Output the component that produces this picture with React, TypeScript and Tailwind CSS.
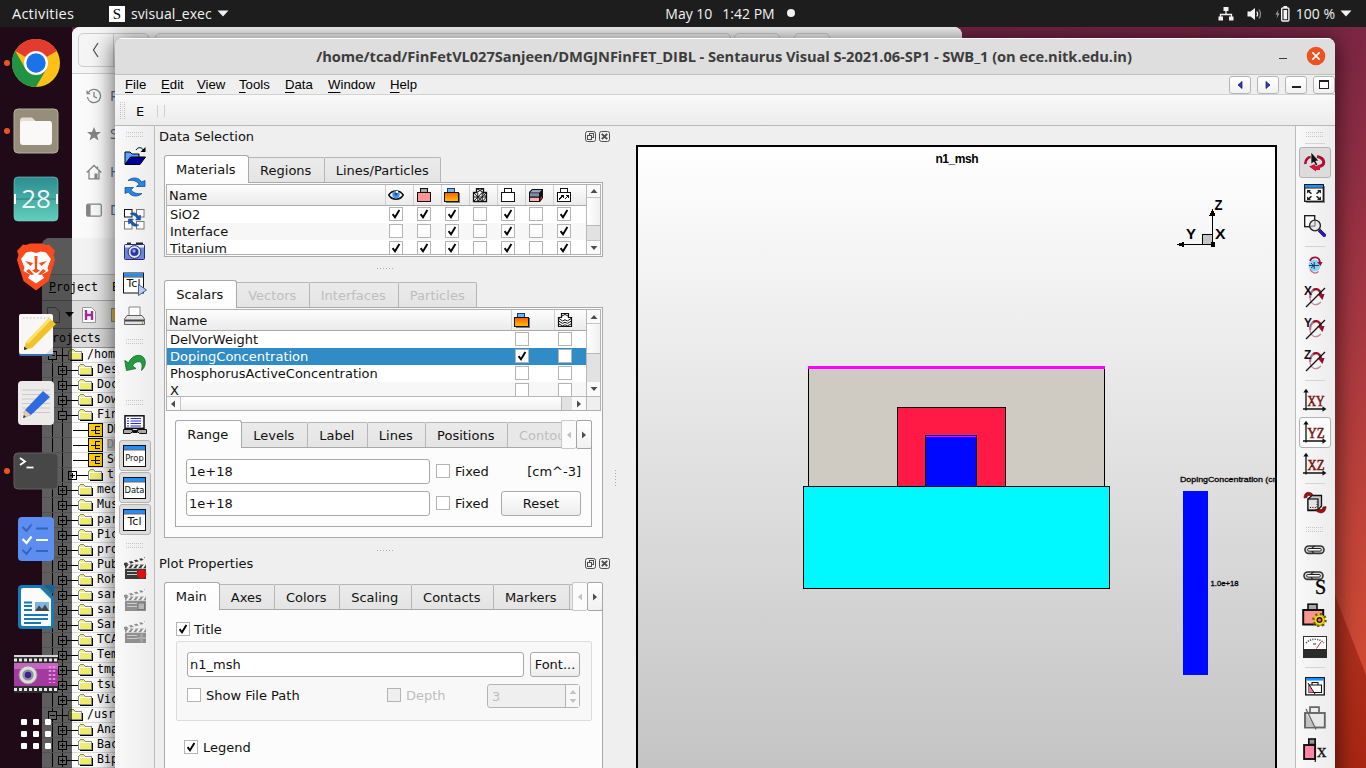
import React from "react";

type Kids = { children?: React.ReactNode };

const Svg = ({ w, h, children, vb, crisp }: Kids & { w: number; h: number; vb?: string; crisp?: boolean }) => (
  <svg width={w} height={h} viewBox={vb ?? `0 0 ${w} ${h}`} className="block shrink-0" shapeRendering={crisp ? "crispEdges" : undefined}>
    {children}
  </svg>
);

/* ---------- small widgets ---------- */

const Check = ({ on, off }: { on?: boolean; off?: boolean }) => (
  <span className={`block h-[14px] w-[14px] shrink-0 border border-[#b4b4b4] ${off ? "bg-[#efefef]" : "bg-white"}`}>
    {on && (
      <Svg w={12} h={12}>
        <path d="M2.6 6.2 L5 9.3 L9.4 2" fill="none" stroke="#000" strokeWidth="1.9" />
      </Svg>
    )}
  </span>
);

const Grip = () => (
  <Svg w={17} h={5} crisp>
    {[0, 2, 4].map((y) => Array.from({ length: 9 }, (_, i) => <rect key={`${y}-${i}`} x={i * 2} y={y} width="1" height="1" fill={y === 2 ? "#e2e2e2" : "#c4c4c4"} />))}
  </Svg>
);

const HDots = () => (
  <Svg w={17} h={1} crisp>
    {Array.from({ length: 6 }, (_, i) => <rect key={i} x={i * 3} y="0" width="1" height="1" fill="#a8a8a8" />)}
  </Svg>
);

const Arrow = ({ dir, dim, blue }: { dir: "u" | "d" | "l" | "r"; dim?: boolean; blue?: boolean }) => {
  const p = { u: "M0.5 6 L4 2 L7.5 6Z", d: "M0.5 2 L4 6 L7.5 2Z", l: "M6 0.5 L2 4 L6 7.5Z", r: "M2 0.5 L6 4 L2 7.5Z" }[dir];
  return (
    <Svg w={8} h={8}>
      <path d={p} fill={blue ? "#2b3bdc" : dim ? "#c2c2c2" : "#4d4d4d"} stroke={blue ? "#101040" : "none"} strokeWidth="0.7" />
    </Svg>
  );
};

const Tab = ({ w, on, dim, children }: Kids & { w: string; on?: boolean; dim?: boolean }) => (
  <div
    className={`${w} ${
      on
        ? "relative z-10 -mb-px h-[28px] rounded-t-[3px] border border-b-0 border-[#a9a9a9] bg-linear-to-b from-white to-[#fcfcfc]"
        : "h-[25px] rounded-tr-[2px] border-t border-r border-[#b6b6b6] bg-linear-to-b from-[#ebebeb] to-[#e4e4e4]"
    } ${dim ? "text-[#bebebe]" : "text-[#111]"} flex shrink-0 items-center justify-center overflow-hidden pr-[1.5px] whitespace-nowrap`}
  >
    {children}
  </div>
);

const TabArrows = () => (
  <div className="relative z-20 -mb-[2px] flex h-[29px] shrink-0">
    <div className="flex w-[15px] items-center justify-center rounded-[2px] border border-r-0 border-[#c8c8c8] bg-[#fbfbfb]"><Arrow dir="l" dim /></div>
    <div className="flex w-[16px] items-center justify-center rounded-[2px] border border-[#a5a5a5] bg-linear-to-b from-white to-[#f1f1f1]"><Arrow dir="r" /></div>
  </div>
);

const DockTitle = ({ children }: Kids) => (
  <div className="flex h-[21px] items-center justify-between pr-[2px] pl-[4px]">
    <span>{children}</span>
    <div className="flex gap-[3px]">
      <Svg w={11} h={11}>
        <rect x="0.5" y="0.5" width="10" height="10" rx="2" fill="#f0f0f0" stroke="#4d4d4d" />
        <rect x="4.5" y="2.5" width="4" height="4" fill="none" stroke="#4d4d4d" />
        <rect x="2.5" y="4.5" width="4" height="4" fill="#f0f0f0" stroke="#4d4d4d" />
      </Svg>
      <Svg w={11} h={11}>
        <rect x="0.5" y="0.5" width="10" height="10" rx="2" fill="#f0f0f0" stroke="#4d4d4d" />
        <path d="M2.8 2.8 L8.2 8.2 M8.2 2.8 L2.8 8.2" stroke="#4d4d4d" strokeWidth="1.9" />
      </Svg>
    </div>
  </div>
);

const Field = ({ w, children }: Kids & { w: string }) => (
  <div className={`${w} flex h-[25px] shrink-0 items-center rounded-[3px] border border-[#a9a9a9] bg-white pl-[2px] text-[#111]`}>{children}</div>
);

const Btn = ({ w, children }: Kids & { w: string }) => (
  <div className={`${w} flex h-[25px] shrink-0 items-center justify-center rounded-[3px] border border-[#a9a9a9] bg-linear-to-b from-white to-[#ededed] text-[#111]`}>{children}</div>
);

/* ---------- table header icons ---------- */

const Eye = () => (
  <Svg w={16} h={14}>
    <path d="M0.8 7 C4 1.5 12 1.5 15.2 7 C12 12.5 4 12.5 0.8 7Z" fill="#fff" stroke="#111" strokeWidth="1.5" />
    <circle cx="8" cy="6.6" r="3.7" fill="#3f97f5" />
    <circle cx="8" cy="6" r="1.5" fill="#1b4c9c" />
    <rect x="8" y="3" width="2" height="2" fill="#fff" />
  </Svg>
);
const Box = ({ body, cap, extra }: { body: string; cap: string; extra?: React.ReactNode }) => {
  const orange = body === "orange";
  return (
    <Svg w={17} h={15} crisp>
      {orange && (
        <defs>
          <linearGradient id="og" x1="0" y1="0" x2="0" y2="1">
            <stop offset="0" stopColor="#ff5a00" />
            <stop offset="1" stopColor="#ffc400" />
          </linearGradient>
        </defs>
      )}
      {orange ? (
        <>
          <path d="M2 15V14H15V5H16V15Z" fill="#777" />
          <rect x="3.5" y="0.5" width="7" height="4" fill={cap} stroke="#1f3f6a" />
          <rect x="0.5" y="4.5" width="14" height="9" fill="url(#og)" stroke="#111" />
        </>
      ) : (
        <>
          <rect x="4.5" y="0.5" width="7" height="4" fill={cap} stroke="#111" />
          <rect x="1.5" y="4.5" width="13" height="9" fill={body} stroke="#111" />
        </>
      )}
      {extra}
    </Svg>
  );
};
const Mesh = () => (
  <Svg w={16} h={15}>
    <path d="M4.5 0.5h7v4h3v9h-13v-9h3z" fill="#fff" stroke="#111" strokeWidth="1.3" />
    <path d="M4.5 0.5l7 4M11.5 0.5l-7 4M1.5 9h13M5.8 4.5v9M10.2 4.5v9M1.5 4.5l4.3 4.5-4.3 4.5M5.8 9l4.4-4.5 4.3 4.5-4.3 4.5-4.4-4.5M14.5 4.5l-4.3 4.5M5.8 13.5l4.4-4.5" stroke="#111" strokeWidth="1" fill="none" />
  </Svg>
);
const Slab = () => (
  <Svg w={16} h={15}>
    <path d="M1 4l3-3h11v9l-3 4H1z" fill="#111" />
    <path d="M2 4.5l2.5-2.5h9l-2 2.5z" fill="#9aa7c0" />
    <rect x="2" y="5.2" width="9" height="3.3" fill="#7e8ca8" />
    <rect x="2" y="9.8" width="9" height="3.2" fill="#ffb0b0" />
    <path d="M12.5 10l1.5-2v2l-1.5 2z" fill="#ff2020" />
  </Svg>
);
const Flow = () => <Box body="#fff" cap="#fff" extra={<g fill="none" stroke="#111"><path d="M3 11.5l4-4M4.5 7.5h2.5v2.5M8.5 11.5l4-4M10 7.5h2.5v2.5" /></g>} />;
const Contour = () => (
  <Svg w={16} h={15}>
    <path d="M4.5 0.5h7v4h3v9h-13v-9h3z" fill="#fff" stroke="#111" strokeWidth="1.2" />
    <path d="M5 3l3-1.6L11 3M2 5.5l3.5 2.4L8 6.8l2.5 1.1L14 5.5M2 8.2l3.5 2.2L8 9.3l2.5 1.1L14 8.2M2 11l3.5 1.8L8 11.8l2.5 1L14 11" stroke="#111" strokeWidth="1" fill="none" />
  </Svg>
);

/* ---------- toolbar icons ---------- */

const Win = ({ label, children }: Kids & { label?: string }) => (
  <Svg w={23} h={22}>
    <rect x="0.5" y="0.5" width="22" height="21" fill="#fff" stroke="#111" />
    <rect x="1" y="1" width="21" height="3.4" fill="#1c8fff" />
    <path d="M0 4.9h23" stroke="#111" strokeWidth="0.8" />
    {label && <text x="11.5" y="16" textAnchor="middle" fontFamily="DejaVu Sans" fontSize={label === "Tcl" ? 11 : 8.4} fill="#111">{label}</text>}
    {children}
  </Svg>
);
const OpenIcon = () => (
  <Svg w={22} h={20}>
    <path d="M1 18V6h5l2 2h7v4" fill="#58a6ff" stroke="#000" />
    <path d="M1 18.5L6.5 11H21.5L16 18.5Z" fill="#000099" stroke="#000" />
    <path d="M12 4C14 0.8 17.5 1 19.5 4" fill="none" stroke="#000" />
    <path d="M21.5 1V6H16.5Z" fill="#000" />
  </Svg>
);
const RefreshIcon = () => (
  <Svg w={22} h={20}>
    <g fill="#2a86e6" stroke="#0b3f8f" strokeWidth="0.7">
      <path d="M4 3.5C9 -0.8 15.5 0.8 17.5 5L21 3.5V9.5H12.5L15 7.2C13 4 9 2.8 4 3.5Z" />
      <path d="M18 16.5C13 20.8 6.5 19.2 4.5 15L1 16.5V10.5H9.5L7 12.8C9 16 13 17.2 18 16.5Z" />
    </g>
  </Svg>
);
const BoxesIcon = () => (
  <Svg w={21} h={21}>
    {[[0.5, 0.5], [12.5, 0.5], [0.5, 12.5], [12.5, 12.5]].map(([x, y], i) => <rect key={i} x={x} y={y} width="7.5" height="7.5" fill="#fff" stroke={i ? "#777" : "#111"} />)}
    <g fill="#1458b8" stroke="#0b2f6f" strokeWidth="0.4">
      <path d="M6 5C9.5 2.6 13 4 14.2 7L16.5 6V11H11.5L13 9.2C11.5 6.8 9 5.6 6 5Z" />
      <path d="M15 16C11.5 18.4 8 17 6.8 14L4.5 15V10H9.5L8 11.8C9.5 14.2 12 15.4 15 16Z" />
    </g>
  </Svg>
);
const CameraIcon = () => (
  <Svg w={21} h={18}>
    <rect x="3" y="0.5" width="4" height="3" fill="#333" />
    <rect x="12" y="0.5" width="7" height="3" fill="#223" />
    <rect x="0.5" y="2.5" width="20" height="15" rx="1" fill="#6f86dc" stroke="#25306b" />
    <rect x="1" y="3" width="19" height="2.5" fill="#e8edff" />
    <circle cx="10.5" cy="10" r="6.4" fill="#dfe5fb" stroke="#27306a" />
    <circle cx="10.5" cy="10" r="4" fill="#2a36a6" />
    <circle cx="10" cy="9" r="1.7" fill="#97a8ff" />
  </Svg>
);
const TclRunIcon = () => (
  <Svg w={24} h={24}>
    <rect x="0.5" y="1" width="20" height="20" fill="#fff" stroke="#111" />
    <rect x="1" y="1.5" width="19" height="3" fill="#1c8fff" />
    <path d="M0 5h21" stroke="#111" strokeWidth="0.8" />
    <text x="10.5" y="14.5" textAnchor="middle" fontFamily="DejaVu Sans" fontSize="11" fill="#111">Tcl</text>
    <path d="M15.5 12.5L23.5 18L15.5 23.5Z" fill="#b9c9ef" stroke="#4b5d8f" />
  </Svg>
);
const PrintIcon = () => (
  <Svg w={21} h={20}>
    <path d="M5 10V1h11v9" fill="#fff" stroke="#888" />
    <path d="M3 9.5h15l2.5 3.5v5.5H0.5V13z" fill="#e2e2e2" stroke="#666" />
    <path d="M1 13.5h19v2H1z" fill="#444" />
    <circle cx="18.5" cy="17" r="0.8" fill="#3a3" />
  </Svg>
);
const UndoIcon = () => (
  <Svg w={22} h={18}>
    <path d="M0.8 6.5L2.5 16.5L12 14.5L8.5 12C10.5 7.5 15.5 6.5 17.5 9C18.5 11 18 14 17.5 16.5C22.5 12 22.5 5 18 2.2C13 -0.3 7 3 4.5 8.8Z" fill="#259a43" stroke="#16682b" strokeWidth="0.8" />
  </Svg>
);
const MonitorIcon = () => (
  <Svg w={24} h={20}>
    <rect x="2" y="0.8" width="19" height="12.5" fill="#fff" stroke="#111" strokeWidth="1.5" />
    <path d="M4 3.5h2M7.5 3.5H18M4 6h2M7.5 6H18M4 8.5h2M7.5 8.5H18M4 11h2M7.5 11H18" stroke="#2a2ae0" strokeWidth="1.2" />
    <path d="M0.5 14.5h9l1 2h3l1-2h9v4h-7l-1.5-1.5h-6l-1.5 1.5h-7z" fill="#aaa" stroke="#111" />
    <path d="M8.5 15h7l-1.5 3h-4z" fill="#111" />
  </Svg>
);
const Clapper = ({ c, kind }: { c: string; kind: "rec" | "stop" | "add" }) => (
  <Svg w={24} h={24}>
    <g fill={c}>
      <path d="M1 7L22 1.2V3.6L1 9.5Z" />
      <rect x="2" y="8.6" width="21" height="3.4" />
      <rect x="2" y="12.6" width="21" height="10.4" />
    </g>
    <path d="M4 5.5l3 2.5M9 4l3 2.5M14 2.6l3 2.5M19 1.2l3 2.5M7 8.5l-3 3.7M12 8.5l-3 3.7M17 8.5l-3 3.7M22 8.5l-3 3.7" stroke="#f6f6f6" strokeWidth="1.9" />
    <path d="M4 15.5h10M4 18.5h10" stroke="#ccc" />
    {kind === "rec" && <circle cx="18.8" cy="18" r="4.6" fill="#e01010" />}
    {kind === "stop" && <rect x="15" y="15" width="6.5" height="6.5" fill="#b5b5b5" stroke="#777" />}
    {kind === "add" && <path d="M18.5 13.5v9M14 18h9" stroke="#aaa" strokeWidth="2" />}
  </Svg>
);

const PointerIcon = () => (
  <Svg w={22} h={20}>
    <path d="M1.5 12C1 8 4 4.5 8 5" fill="none" stroke="#b00d30" strokeWidth="2.6" />
    <path d="M13 4.5C21 6 22 13 15 14.5" fill="none" stroke="#b00d30" strokeWidth="3" />
    <path d="M5 14.5L12 11.5V13.5L16 13V18H12V19.5Z" fill="#d4143c" />
    <path d="M7 0L15 9H11.8L13.8 12.8L11.8 13.8L9.8 10L7 12.2Z" fill="#111" stroke="#fff" strokeWidth="0.6" />
  </Svg>
);
const FitIcon = () => (
  <Svg w={21} h={19}>
    <rect x="2" y="2" width="19" height="17" fill="#888" />
    <rect x="0.7" y="0.7" width="18.6" height="16.6" fill="#fff" stroke="#111" strokeWidth="1.3" />
    <rect x="1" y="1" width="18" height="2.6" fill="#1c8fff" />
    <path d="M1 4h18" stroke="#111" />
    <path d="M3 6h4l-1.2 1.3L8 9.3 7 10.3 4.4 8.2 3 9.5zM17 6h-4l1.2 1.3L12 9.3l1 1 2.6-2.1L17 9.5zM3 16h4l-1.2-1.3L8 12.7l-1-1-2.6 2.1L3 12.5zM17 16h-4l1.2-1.3-2.2-2 1-1 2.6 2.1 1.4-1.3z" fill="#222" />
  </Svg>
);
const ZoomIcon = () => (
  <Svg w={22} h={22}>
    <rect x="0.7" y="0.7" width="10" height="11" fill="#fff" stroke="#111" strokeWidth="1.3" />
    <circle cx="11" cy="10.5" r="5.4" fill="#e9e9e9" fillOpacity="0.9" stroke="#222" strokeWidth="1.4" />
    <path d="M11 6v5H7" stroke="#777" fill="none" />
    <path d="M15 15L21 21" stroke="#111" strokeWidth="3.4" />
    <path d="M15.5 15.5L21.5 21.5" stroke="#3a12e0" strokeWidth="2.2" />
  </Svg>
);
const GlobeIcon = () => (
  <Svg w={16} h={18}>
    <circle cx="7.5" cy="9.5" r="6" fill="#8fd0fa" />
    <path d="M2 9.5h10M4 7.2c1.6 1.4 2 1.8 3.2 2.3L4 12M7.2 6v7" stroke="#0b3f5a" fill="none" />
    <path d="M3 5C5 0 12 0 13 6" fill="none" stroke="#a01030" strokeWidth="1.8" />
    <path d="M10 6h5.5l-2 4z" fill="#a01030" />
    <path d="M3 13.5C5 17.5 9 18 11.5 15.5" fill="none" stroke="#c06a80" strokeWidth="1.3" />
  </Svg>
);
const RotIcon = ({ l }: { l: string }) => (
  <Svg w={24} h={24}>
    <path d="M7 13C7 3.5 15.5 1.5 18 9" fill="none" stroke="#b07080" strokeWidth="2.2" />
    <path d="M10 5C13.5 2.5 17 4.5 18 9" fill="none" stroke="#960f2c" strokeWidth="2" />
    <path d="M14.5 9h7l-2 6z" fill="#960f2c" />
    <path d="M7 12C7 19.5 13 22 18 17" fill="none" stroke="#c08a9c" strokeWidth="1.2" />
    <path d="M3 22L22 3" stroke="#111" strokeWidth="1.2" />
    <text x="1" y="10" fontFamily="Liberation Sans" fontSize="12" fontWeight="bold" fill="#111">{l}</text>
  </Svg>
);
const AxIcon = ({ l }: { l: string }) => (
  <Svg w={24} h={24}>
    <path d="M3 2V22.5M0 21H22" stroke="#111" strokeWidth="1.3" fill="none" />
    <path d="M0.3 4.5L3 0.8 5.7 4.5ZM19.5 18.3L23.4 21 19.5 23.7Z" fill="#111" />
    <text x="13" y="17.5" textAnchor="middle" fontFamily="Liberation Serif" fontSize="14" fill="#7b1212" stroke="#7b1212" strokeWidth="0.5" textLength="17" lengthAdjust="spacingAndGlyphs">{l}</text>
  </Svg>
);
const CubeIcon = () => (
  <Svg w={24} h={23}>
    <path d="M5 8l4-3.5h9.5V15l-4 4.5H5z" fill="#c9c9c9" stroke="#111" strokeWidth="1.3" />
    <rect x="5" y="8" width="10" height="11" fill="#e2e2e2" stroke="#111" strokeWidth="1.2" />
    <path d="M7 16.5h7V9.5" stroke="#111" strokeDasharray="1 1.4" fill="none" />
    <path d="M1 7C1 1.5 5 0 9 2.5L10.5 4.5H4.5L4 6.5ZM23 15.5C23 21.5 18.5 23.5 14 20.5L12.5 18.5H19L20 16Z" fill="#9c1010" stroke="#5b0808" strokeWidth="0.6" />
  </Svg>
);
const Chain = () => (
  <g>
    <rect x="1" y="1" width="12" height="7.4" rx="3.7" fill="#d8d8d8" stroke="#333" strokeWidth="1.6" />
    <rect x="8" y="1" width="12" height="7.4" rx="3.7" fill="#d8d8d8" stroke="#333" strokeWidth="1.6" />
    <rect x="3.6" y="3.5" width="13.8" height="2.6" rx="1.3" fill="#fff" stroke="#222" />
  </g>
);
const LinkIcon = () => <Svg w={21} h={10}><Chain /></Svg>;
const LinkSIcon = () => (
  <Svg w={24} h={24}>
    <Chain />
    <text x="12" y="22.5" fontFamily="Liberation Serif" fontSize="20" fill="#000" stroke="#000" strokeWidth="0.4">S</text>
  </Svg>
);
const GearBoxIcon = () => (
  <Svg w={25} h={24}>
    <rect x="6" y="1.2" width="9" height="6" fill="#aaa" stroke="#111" strokeWidth="1.6" />
    <rect x="1.2" y="7" width="20" height="14.5" fill="#ff9494" stroke="#111" strokeWidth="2" />
    <circle cx="17.5" cy="17" r="5.8" fill="#f5e500" stroke="#6a6000" strokeWidth="3" strokeDasharray="2 2.5" />
    <circle cx="17.5" cy="17" r="5" fill="#f5e500" stroke="#8a7d00" strokeWidth="0.5" />
    <circle cx="17.5" cy="17" r="2.3" fill="#e77" stroke="#301030" strokeWidth="1.5" />
  </Svg>
);
const GaugeIcon = () => (
  <Svg w={24} h={22}>
    <rect x="0.5" y="0.5" width="23" height="21" fill="#fff" stroke="#333" />
    <rect x="0" y="13" width="24" height="9" fill="#2b2b2b" />
    <path d="M3 7C8 2 16 2 21 7" fill="none" stroke="#555" strokeWidth="1.6" strokeDasharray="1.2 1.2" />
    <path d="M13.5 12.5L18 6" stroke="#e02020" />
    <path d="M10 8h3" stroke="#333" />
  </Svg>
);
const CutWinIcon = () => (
  <Svg w={20} h={19}>
    <rect x="0.7" y="0.7" width="18.6" height="17.2" fill="#fff" stroke="#111" strokeWidth="1.3" />
    <rect x="1.2" y="1" width="17.6" height="2.6" fill="#1c8fff" />
    <path d="M7 8V5.5h6V8M4 8h12.5v7.5H4z" fill="#fff" stroke="#111" strokeWidth="1.1" />
    <path d="M4 8.5L9 15.5H4z" fill="#ff7a9a" />
    <path d="M3 6L10 17" stroke="#111" />
  </Svg>
);
const GreyCutIcon = () => (
  <Svg w={22} h={24}>
    <path d="M6 7.5V1.2h9v6.3" fill="#eee" stroke="#666" strokeWidth="1.7" />
    <rect x="1" y="7" width="19.8" height="14.5" fill="#e8e8e8" stroke="#666" strokeWidth="1.9" />
    <path d="M2 8L11 21H2z" fill="#c2c2c2" />
    <path d="M2 3L12 23.5" stroke="#666" strokeWidth="1.3" />
  </Svg>
);
const PinkXIcon = () => (
  <Svg w={24} h={24}>
    <rect x="5.8" y="1" width="6.4" height="5.5" fill="#999" stroke="#111" strokeWidth="1.6" />
    <rect x="1.1" y="7" width="11" height="14" fill="#ff86a6" stroke="#111" strokeWidth="1.9" />
    <path d="M12.3 0.5V24" stroke="#111" strokeWidth="1.2" />
    <text x="14" y="18.5" fontFamily="Liberation Serif" fontSize="19" fill="#111" stroke="#111" strokeWidth="0.3">x</text>
  </Svg>
);

/* ---------- toolbars ---------- */

const Cell = ({ h, children }: Kids & { h: string }) => <div className={`${h} flex w-full shrink-0 items-center justify-center`}>{children}</div>;
const Pressed = ({ children, light }: Kids & { light?: boolean }) => (
  <div className={`flex h-[31px] w-[32px] items-center justify-center rounded-[3px] border border-[#b2b2b2] ${light ? "bg-[#fbfbfb]" : "bg-[#dcdcdc]"}`}>{children}</div>
);
const Sep = () => <div className="h-px w-[20px] bg-[#d3d3d3]" />;

const LeftBar = () => (
  <div className="flex w-[40px] shrink-0 flex-col border-r border-[#bcbcbc] bg-linear-to-r from-[#f9f9f9] to-[#ececec]">
    <Cell h="h-[17px]"><Grip /></Cell>
    <Cell h="h-[26px]"><OpenIcon /></Cell>
    <Cell h="h-[36px]"><RefreshIcon /></Cell>
    <Cell h="h-[28px]"><BoxesIcon /></Cell>
    <Cell h="h-[35px]"><CameraIcon /></Cell>
    <Cell h="h-[31px]"><TclRunIcon /></Cell>
    <Cell h="h-[33px]"><PrintIcon /></Cell>
    <Cell h="h-[18px]"><Grip /></Cell>
    <Cell h="h-[26px]"><UndoIcon /></Cell>
    <Cell h="h-[18px]" />
    <Cell h="h-[16px]"><Grip /></Cell>
    <Cell h="h-[30px]"><MonitorIcon /></Cell>
    <div className="flex flex-col items-center gap-px">
      <Pressed><Win label="Prop" /></Pressed>
      <Pressed><Win label="Data" /></Pressed>
      <Pressed><Win label="Tcl" /></Pressed>
    </div>
    <Cell h="h-[21px]"><Grip /></Cell>
    <div className="flex flex-col items-center gap-[8px]">
      <Clapper c="#3a3a3a" kind="rec" />
      <Clapper c="#8f8f8f" kind="stop" />
      <Clapper c="#8f8f8f" kind="add" />
    </div>
  </div>
);

const RightBar = () => (
  <div className="flex w-[40px] shrink-0 flex-col border-l border-[#bcbcbc] bg-linear-to-r from-[#f9f9f9] to-[#ececec] pr-[2px]">
    <Cell h="h-[16px]"><Grip /></Cell>
    <Cell h="h-[3px]"><Sep /></Cell>
    <Cell h="h-[34px]"><Pressed><PointerIcon /></Pressed></Cell>
    <Cell h="h-[29px]"><FitIcon /></Cell>
    <Cell h="h-[36px]"><ZoomIcon /></Cell>
    <Cell h="h-[5px]"><Sep /></Cell>
    <Cell h="h-[32px]"><GlobeIcon /></Cell>
    <Cell h="h-[32px]"><RotIcon l="X" /></Cell>
    <Cell h="h-[32px]"><RotIcon l="Y" /></Cell>
    <Cell h="h-[32px]"><RotIcon l="Z" /></Cell>
    <Cell h="h-[7px]"><Sep /></Cell>
    <Cell h="h-[32px]"><AxIcon l="XY" /></Cell>
    <Cell h="h-[32px]"><Pressed light><AxIcon l="YZ" /></Pressed></Cell>
    <Cell h="h-[32px]"><AxIcon l="XZ" /></Cell>
    <Cell h="h-[7px]"><Sep /></Cell>
    <Cell h="h-[30px]"><CubeIcon /></Cell>
    <Cell h="h-[25px]"><Grip /></Cell>
    <Cell h="h-[16px]"><LinkIcon /></Cell>
    <Cell h="h-[8px]" />
    <Cell h="h-[33px]"><LinkSIcon /></Cell>
    <Cell h="h-[32px]"><GearBoxIcon /></Cell>
    <Cell h="h-[32px]"><GaugeIcon /></Cell>
    <Cell h="h-[8px]"><Sep /></Cell>
    <Cell h="h-[30px]"><CutWinIcon /></Cell>
    <Cell h="h-[33px]"><GreyCutIcon /></Cell>
    <Cell h="h-[32px]"><PinkXIcon /></Cell>
  </div>
);

/* ---------- data selection ---------- */

const ScrollBtn = ({ dir, cls }: { dir: "u" | "d" | "l" | "r"; cls: string }) => (
  <div className={`${cls} flex shrink-0 items-center justify-center border-[#c6c6c6] bg-[#fafafa]`}><Arrow dir={dir} /></div>
);

const materials: [string, boolean[]][] = [
  ["SiO2", [true, true, true, false, true, false, true]],
  ["Interface", [false, false, true, false, true, false, true]],
  ["Titanium", [true, true, true, false, true, false, true]],
];
const headIcons = [
  <Eye />, <Box body="#ff9494" cap="#a8a8a8" />, <Box body="orange" cap="#6db2ff" />, <Mesh />, <Box body="#fff" cap="#fff" />, <Slab />, <Flow />,
];

const MaterialsTable = () => (
  <div className="flex h-[71px] w-[435px] border border-[#b0b0b0] bg-white">
    <div className="w-[419px] shrink-0 overflow-hidden">
      <div className="flex h-[21px] border-b border-[#a9a9a9] bg-linear-to-b from-[#fdfdfd] to-[#ebebeb]">
        <div className="flex w-[218px] shrink-0 items-center pl-[2px]">Name</div>
        {headIcons.map((ic, i) => (
          <div key={i} className={`${i === 6 ? "flex-1" : "w-[28px]"} flex shrink-0 items-center border-l border-[#cfcfcf] pl-[2px]`}>{ic}</div>
        ))}
      </div>
      {materials.map(([n, c], r) => (
        <div key={n} className={`flex h-[17px] ${r === 1 ? "bg-[#f7f7f7]" : "bg-white"}`}>
          <div className="flex w-[218px] shrink-0 items-center pl-[3px] leading-[17px]">{n}</div>
          {c.map((v, i) => <div key={i} className="w-[28px] shrink-0 pt-px pl-[4px]"><Check on={v} /></div>)}
        </div>
      ))}
    </div>
    <div className="flex w-[14px] flex-col border-l border-[#b8b8b8] bg-[#e2e2e2]">
      <ScrollBtn dir="u" cls="h-[13px] border-b" />
      <div className="h-[28px] border-b border-[#b8b8b8] bg-linear-to-r from-white to-[#f0f0f0]" />
      <div className="flex-1" />
      <ScrollBtn dir="d" cls="h-[14px] border-t" />
    </div>
  </div>
);

const scalars: [string, boolean][] = [["DelVorWeight", false], ["DopingConcentration", true], ["PhosphorusActiveConcentration", false], ["X", false]];

const ScalarsTable = () => (
  <div className="flex h-[102px] w-[435px] flex-col border border-[#b0b0b0] bg-white">
    <div className="flex h-[86px]">
      <div className="w-[419px] shrink-0 overflow-hidden">
        <div className="flex h-[21px] border-b border-[#a9a9a9] bg-linear-to-b from-[#fdfdfd] to-[#ebebeb]">
          <div className="flex w-[344px] shrink-0 items-center pl-[2px]">Name</div>
          <div className="flex w-[43px] shrink-0 items-center border-l border-[#cfcfcf] pl-[2px]"><Box body="orange" cap="#6db2ff" /></div>
          <div className="flex flex-1 items-center border-l border-[#cfcfcf] pl-[2px]"><Contour /></div>
        </div>
        {scalars.map(([n, on], r) => (
          <div key={n} className={`flex h-[17px] ${on ? "bg-[#308cc6] text-white" : r === 3 ? "bg-[#f7f7f7]" : "bg-white"}`}>
            <div className="flex w-[344px] shrink-0 items-center pl-[3px] leading-[17px]">{n}</div>
            <div className="w-[43px] shrink-0 pt-px pl-[4px]"><Check on={on} /></div>
            <div className="pt-px pl-[4px]"><Check /></div>
          </div>
        ))}
      </div>
      <div className="flex w-[14px] flex-col border-l border-[#b8b8b8] bg-[#e2e2e2]">
        <ScrollBtn dir="u" cls="h-[14px] border-b" />
        <div className="h-[30px] border-b border-[#b8b8b8] bg-linear-to-r from-white to-[#f0f0f0]" />
        <div className="flex-1" />
        <ScrollBtn dir="d" cls="h-[14px]" />
      </div>
    </div>
    <div className="flex h-[14px] border-t border-[#b8b8b8] bg-[#e2e2e2]">
      <ScrollBtn dir="l" cls="w-[14px] border-r pr-px" />
      <div className="w-[381px] border-r border-[#b8b8b8] bg-linear-to-b from-white to-[#f0f0f0]" />
      <div className="w-[10px]" />
      <ScrollBtn dir="r" cls="w-[14px]" />
      <div className="flex-1 border-l border-[#b8b8b8] bg-[#efefef]" />
    </div>
  </div>
);

const RangeRow = ({ children }: Kids) => (
  <div className="flex items-center">
    <Field w="w-[244px]">1e+18</Field>
    <div className="mb-px ml-[6px]"><Check /></div>
    <span className="ml-[5px]">Fixed</span>
    <div className="ml-auto">{children}</div>
  </div>
);

const Panel = () => (
  <div className="flex w-[457px] shrink-0 flex-col overflow-hidden text-[#111]">
    <DockTitle>Data Selection</DockTitle>
    <div className="mt-[8px] ml-[9px] flex w-[439px] flex-col">
      <div className="flex h-[27px] items-end">
        <Tab w="w-[85px]" on>Materials</Tab>
        <Tab w="w-[76px]">Regions</Tab>
        <Tab w="w-[116px]"><span className="pl-px">Lines/Particles</span></Tab>
      </div>
      <div className="h-[75px] border border-[#a9a9a9] bg-[#fcfcfc] p-px"><MaterialsTable /></div>
    </div>
    <div className="ml-[222px] flex h-[23px] items-center"><HDots /></div>
    <div className="ml-[9px] flex w-[439px] flex-col">
      <div className="flex h-[27px] items-end">
        <Tab w="w-[73px]" on>Scalars</Tab>
        <Tab w="w-[73px]" dim>Vectors</Tab>
        <Tab w="w-[89px]" dim>Interfaces</Tab>
        <Tab w="w-[78px]" dim><span className="pl-px">Particles</span></Tab>
      </div>
      <div className="h-[231px] border border-[#a9a9a9] bg-[#fcfcfc] p-px">
        <ScalarsTable />
        <div className="mt-[9px] ml-[9px] w-[417px]">
          <div className="flex h-[27px] items-end">
            <Tab w="w-[67px]" on>Range</Tab>
            <Tab w="w-[66px]">Levels</Tab>
            <Tab w="w-[60px]">Label</Tab>
            <Tab w="w-[58px]">Lines</Tab>
            <Tab w="w-[82px]">Positions</Tab>
            <div className="flex h-[25px] w-[53px] items-center overflow-hidden border-t border-[#b6b6b6] bg-[#e8e8e8] pl-[11px] text-[#bebebe]">Contours</div>
            <TabArrows />
          </div>
          <div className="flex h-[80px] flex-col gap-[7px] border border-[#a9a9a9] bg-[#fcfcfc] px-[10px] pt-[11px]">
            <RangeRow>[cm^-3]</RangeRow>
            <RangeRow><Btn w="w-[80px]">Reset</Btn></RangeRow>
          </div>
        </div>
      </div>
    </div>
    <div className="ml-[222px] flex h-[15px] items-end pb-[2px]"><HDots /></div>
    <DockTitle>Plot Properties</DockTitle>
    <div className="mt-[8px] ml-[9px] flex w-[439px] flex-1 flex-col">
      <div className="flex h-[27px] items-end">
        <Tab w="w-[56px]" on>Main</Tab>
        <Tab w="w-[55px]">Axes</Tab>
        <Tab w="w-[65px]">Colors</Tab>
        <Tab w="w-[72px]">Scaling</Tab>
        <Tab w="w-[82px]">Contacts</Tab>
        <Tab w="w-[76px]">Markers</Tab>
        <div className="h-[25px] w-[2px] border-t border-[#b6b6b6] bg-[#e8e8e8]" />
        <TabArrows />
      </div>
      <div className="flex-1 border border-b-0 border-[#a9a9a9] bg-[#fcfcfc] pt-[12px] pr-[10px] pl-[11px]">
        <div className="flex h-[14px] items-center gap-[4px]"><Check on />Title</div>
        <div className="mt-[5px] h-[80px] rounded-[2px] border border-[#dcdcdc] bg-[#f8f8f8] pt-[10px] pr-[11px] pl-[10px]">
          <div className="flex justify-between">
            <Field w="w-[337px]">n1_msh</Field>
            <Btn w="w-[50px]">Font...</Btn>
          </div>
          <div className="mt-[7px] flex items-center">
            <div className="mb-[2px] flex items-center">
              <Check />
              <span className="ml-[5px] w-[181px]">Show File Path</span>
              <Check off />
              <span className="ml-[5px] text-[#bebebe]">Depth</span>
            </div>
            <div className="ml-auto flex h-[24px] w-[93px] rounded-[3px] border border-[#b4b4b4] bg-[#efefef] text-[#bebebe]">
              <span className="flex flex-1 items-center pl-[4px]">3</span>
              <div className="flex w-[14px] flex-col items-center justify-center gap-px border-l border-[#b4b4b4] bg-[#f8f8f8]"><Arrow dir="u" dim /><Arrow dir="d" dim /></div>
            </div>
          </div>
        </div>
        <div className="mt-[19px] flex h-[14px] items-center gap-[5px] pl-[8px]"><Check on />Legend</div>
      </div>
    </div>
  </div>
);

/* ---------- plot ---------- */

const Plot = () => (
  <div className="mt-[19px] w-[641px] shrink-0 border-2 border-b-0 border-black bg-linear-to-b from-white to-[#c3c3c3]">
    <Svg w={637} h={621} vb="638 147 637 621" crisp>
      <g fontFamily="Liberation Sans" fontWeight="bold" fill="#000">
        <text x="957" y="163" textAnchor="middle" fontSize="12" textLength="43">n1_msh</text>
        <text x="1214.5" y="210" fontSize="15" textLength="8" lengthAdjust="spacingAndGlyphs">Z</text>
        <text x="1186" y="239" fontSize="15" textLength="10" lengthAdjust="spacingAndGlyphs">Y</text>
        <text x="1215" y="239" fontSize="15" textLength="10.5" lengthAdjust="spacingAndGlyphs">X</text>
        <text x="1180" y="482" fontSize="8" fontWeight="normal" stroke="#000" strokeWidth="0.3" textLength="115" lengthAdjust="spacingAndGlyphs">DopingConcentration (cm^-3)</text>
        <text x="1210.5" y="586" fontSize="7.5" fontWeight="normal" stroke="#000" strokeWidth="0.3" textLength="28" lengthAdjust="spacingAndGlyphs">1.0e+18</text>
      </g>
      <rect x="1202.5" y="234.5" width="10" height="10" fill="#c6c6c6" stroke="#000" />
      <path d="M1212.5 244.5V212M1212.5 244.5H1182" stroke="#000" />
      <path d="M1212.5 208.5L1209.5 215.5H1215.5ZM1177 244.5L1184 241.5V247.5Z" />
      <circle cx="1213" cy="244.5" r="2.5" />
      <rect x="808.5" y="368.5" width="296" height="118" fill="#cfcac2" stroke="#000" />
      <rect x="808" y="366" width="297" height="3" fill="#ff00ff" />
      <rect x="897.5" y="407.5" width="108" height="79" fill="#ff1a46" stroke="#000" />
      <rect x="925.5" y="435.5" width="51" height="51" fill="#0008ff" stroke="#000" />
      <path d="M926 434.5H977M926 436.5H976" stroke="#ff00ff" />
      <rect x="803.5" y="486.5" width="306" height="102" fill="#00f9ff" stroke="#000" />
      <rect x="1183" y="491" width="25" height="184" fill="#0008ff" />
    </Svg>
  </div>
);

/* ---------- main window ---------- */

const menus: [string, string][] = [["File", "w-[36px]"], ["Edit", "w-[36px]"], ["View", "w-[42px]"], ["Tools", "w-[46px]"], ["Data", "w-[43px]"], ["Window", "w-[62px]"], ["Help", "w-[40px]"]];

const WinBtn = ({ children }: Kids) => <div className="flex h-[18px] w-[22px] items-center justify-center rounded-[3px] border border-[#b4b4b4] bg-linear-to-b from-white to-[#f1f1f1]">{children}</div>;

const MainWindow = () => (
  <div className="absolute top-[11px] left-[115px] flex h-[741px] w-[1220px] flex-col overflow-hidden rounded-t-[8px] bg-[#efefef] font-['DejaVu_Sans',sans-serif] text-[13px] leading-none shadow-[0_3px_22px_2px_rgba(0,0,0,0.6)]">
    <div className="flex h-[37px] shrink-0 items-center border-t border-b border-t-white border-b-[#c0c0c0] bg-[#dedede]">
      <div className="w-[1220px] shrink-0 pr-[2px] text-center font-['Open_Sans','Noto_Sans',sans-serif] text-[14.67px] font-bold tracking-[-0.07px] whitespace-nowrap text-[#3d3d3d]">
        /home/tcad/FinFetVL027Sanjeen/DMGJNFinFET_DIBL - Sentaurus Visual S-2021.06-SP1 - SWB_1 (on ece.nitk.edu.in)
      </div>
      <div className="-ml-[56px] flex shrink-0 items-center gap-[19px]">
        <div className="mt-[4px] h-px w-[8px] bg-[#3d3d3d]" />
        <div className="-mt-px">
          <Svg w={20} h={20}>
            <circle cx="10" cy="10" r="9.3" fill="#e95420" />
            <path d="M6.4 6.4L13.6 13.6M13.6 6.4L6.4 13.6" stroke="#fff" strokeWidth="1.6" />
          </Svg>
        </div>
      </div>
    </div>
    <div className="flex h-[20px] shrink-0 items-center justify-between border-b border-[#d2d2d2] pl-[10px] font-['Liberation_Sans',sans-serif] text-[13.2px] text-black">
      <div className="flex">
        {menus.map(([m, w]) => (
          <span key={m} className={w}><span className="underline underline-offset-[3px]">{m[0]}</span>{m.slice(1)}</span>
        ))}
      </div>
      <div className="flex gap-[6px]">
        <WinBtn><Arrow dir="l" blue /></WinBtn>
        <WinBtn><Arrow dir="r" blue /></WinBtn>
        <WinBtn><div className="mt-[5px] h-[2px] w-[9px] bg-[#222]" /></WinBtn>
        <WinBtn><div className="h-[9px] w-[10px] border border-t-2 border-[#222] bg-white" /></WinBtn>
      </div>
    </div>
    <div className="flex h-[31px] shrink-0 items-center border-b border-[#b8b8b8] bg-linear-to-b from-[#f9f9f9] to-[#ececec] pl-[5px]">
      <Svg w={5} h={17} crisp>
        {[0, 2, 4].map((x) => Array.from({ length: 9 }, (_, i) => <rect key={`${x}-${i}`} x={x} y={i * 2} width="1" height="1" fill={x === 2 ? "#dcdcdc" : "#bdbdbd"} />))}
      </Svg>
      <span className="mt-[2px] ml-[11px]">E</span>
      <div className="mt-[2px] ml-[13px] h-[12px] w-[8px] border-r border-l border-[#d0d0d0]" />
    </div>
    <div className="flex flex-1 overflow-hidden">
      <LeftBar />
      <Panel />
      <div className="flex w-[24px] shrink-0 flex-col gap-[2px] pt-[344px] pl-[3px]">
        {[0, 1, 2, 3, 4, 5].map((i) => <div key={i} className="h-px w-px bg-[#a8a8a8]" />)}
      </div>
      <Plot />
      <div className="flex-1" />
      <RightBar />
    </div>
  </div>
);

/* ---------- background windows ---------- */

const FilesWindow = () => (
  <div className="absolute top-0 left-[72px] flex h-[230px] w-[890px] flex-col overflow-hidden rounded-t-[8px] bg-[#fafafa] font-['Noto_Sans',sans-serif] text-[14px] leading-none text-[#5f7391]">
    <div className="flex h-[47px] shrink-0 gap-[6px] border-b border-[#cfcfcf] bg-[#f5f5f5] pt-[6px] pl-[6px]">
      <div className="flex h-[34px] w-[71px] rounded-[5px] border border-[#cdcdcd]">
        <div className="flex w-[35px] items-center justify-center border-r border-[#cdcdcd]">
          <Svg w={8} h={16}><path d="M6 1L1.5 8L6 15" fill="none" stroke="#555" strokeWidth="1.3" /></Svg>
        </div>
      </div>
      <div className="h-[34px] w-[576px] rounded-[5px] border border-[#cdcdcd]" />
      <div className="ml-[-3px] h-[34px] w-[46px] rounded-[5px] border border-[#cdcdcd]" />
      <div className="ml-[8px] h-[34px] w-[36px] rounded-[5px] border border-[#cdcdcd]" />
    </div>
    <div className="flex flex-col pt-[3px] pl-[14px]">
      <div className="flex h-[38px] items-center gap-[8px]">
        <Svg w={16} h={16}><path d="M2.3 4.5A6.6 6.6 0 1 1 1.4 9M8 4v4.5l3 1.5" fill="none" stroke="#858585" strokeWidth="1.3" /><path d="M0.5 2v4.3h4.3z" fill="#858585" /></Svg>R
      </div>
      <div className="flex h-[38px] items-center gap-[8px]">
        <Svg w={16} h={16}><path d="M8 1l2 5h5l-4 3.2 1.5 5.3L8 11.4l-4.5 3.1L5 9.2 1 6h5z" fill="#858585" /></Svg>S
      </div>
      <div className="flex h-[38px] items-center gap-[8px]">
        <Svg w={16} h={16}><path d="M0.7 8.5L8 1.5l7.3 7M3 7v7.8h10V7M11.5 4.5V2.5" fill="none" stroke="#858585" strokeWidth="1.3" /><rect x="8.5" y="9.5" width="3" height="5.5" fill="#858585" /></Svg>H
      </div>
      <div className="flex h-[38px] items-center gap-[8px]">
        <Svg w={16} h={16}><rect x="0.7" y="2.2" width="14.6" height="12" rx="1.5" fill="none" stroke="#858585" strokeWidth="1.3" /><rect x="1" y="2.5" width="3.6" height="11.5" fill="#858585" /></Svg>D
      </div>
    </div>
  </div>
);

/* Folder body is a one-pixel checkerboard of yellow and light grey. */
const Folder = () => (
  <Svg w={15} h={12} crisp>
    <defs>
      <pattern id="dither" width="2" height="2" patternUnits="userSpaceOnUse">
        <rect width="2" height="2" fill="#ffff00" />
        <rect x="0" y="0" width="1" height="1" fill="#dcdcdc" />
        <rect x="1" y="1" width="1" height="1" fill="#dcdcdc" />
      </pattern>
    </defs>
    <path d="M2 11.5H14.5V3.5" stroke="#000" fill="none" />
    <path d="M0.5 10.5V2.5L2.5 0.5H5.5L7.5 2.5H13.5V10.5Z" fill="url(#dither)" stroke="#8a8a8a" />
    <path d="M1.5 10V3.5H13" stroke="#fff" fill="none" />
  </Svg>
);
const Expander = ({ minus }: { minus?: boolean }) => (
  <Svg w={9} h={9} crisp>
    <rect x="0.5" y="0.5" width="8" height="8" fill="#fff" stroke="#000" />
    <path d={minus ? "M2 4.5H7" : "M2 4.5H7M4.5 2V7"} stroke="#000" />
  </Svg>
);

type Kind = "root" | "dir" | "open" | "db" | "sel" | "sub";
const tree: [string, Kind][] = [
  ["/hom", "root"], ["Des", "dir"], ["Doc", "dir"], ["Dow", "dir"], ["Fin", "open"], ["DM", "db"], ["DM", "sel"], ["SO", "db"], ["t", "sub"], ["med", "dir"], ["Mus", "dir"],
  ["par", "dir"], ["Pic", "dir"], ["pro", "dir"], ["Pub", "dir"], ["Roh", "dir"], ["sar", "dir"], ["sar", "dir"], ["Sar", "dir"], ["TCA", "dir"], ["Tem", "dir"], ["tmp", "dir"],
  ["tsu", "dir"], ["Vic", "dir"], ["/usr", "root"], ["Ana", "dir"], ["Bac", "dir"], ["Bip", "dir"],
];

const TreeRow = ({ n, k }: { n: string; k: Kind }) => {
  const db = k === "db" || k === "sel";
  const pad = k === "root" ? "pl-[6px]" : k === "sub" ? "pl-[26px]" : db ? "pl-[31px]" : "pl-[16px]";
  return (
    <div className={`${pad} flex h-[15px] shrink-0 items-center border-b border-[#dcdcdc] whitespace-nowrap`}>
      {!db && <Expander minus={k === "root" || k === "open"} />}
      <div className={`h-px bg-black ${db ? "w-[15px]" : k === "sub" ? "w-[11px]" : "w-[11px]"}`} />
      {db ? (
        <Svg w={15} h={14} crisp>
          <rect x="0.5" y="0.5" width="14" height="13" fill="#ffd000" stroke="#000" />
          <path d="M3 7h4M7.5 3V11M7 3.5h5M7 7h5M7 10.5h5" stroke="#000" fill="none" />
        </Svg>
      ) : <Folder />}
      <span className={`ml-[4px] ${k === "sel" ? "bg-[#cfcfcf] text-[#9a9a9a]" : "text-black"}`}>{n}</span>
    </div>
  );
};

const ProjectWindow = () => (
  <div className="absolute top-[211px] left-[42px] flex h-[530px] w-[500px] flex-col overflow-hidden rounded-tl-[8px] bg-white font-['DejaVu_Sans_Mono',monospace] text-[11.6px] leading-none text-black">
    <div className="h-[37px] shrink-0 border-b border-[#bdbdbd] bg-[#f2f2f2]" />
    <div className="flex h-[26px] shrink-0 items-center gap-[14px] border-b border-[#a8a8a8] bg-[#e6e6e6] pl-[7px]"><span><span className="underline">P</span>roject</span><span>Edit</span></div>
    <div className="flex h-[28px] shrink-0 items-center border-b border-[#9a9a9a] bg-[#dedede] pl-[5px]">
      <Svg w={13} h={16}><path d="M0.5 0.5h8l4 4v11H0.5z" fill="#ddd" stroke="#888" /></Svg>
      <div className="ml-[5px]"><Svg w={9} h={5}><path d="M0 0H9L4.5 5Z" fill="#111" /></Svg></div>
      <div className="ml-[8px]">
        <Svg w={14} h={16}><path d="M0.5 0.5h9l4 4v11H0.5z" fill="#fff" stroke="#999" /><path d="M4 3v10M10 4v9M4 8h6" stroke="#a428a4" strokeWidth="2.4" /></Svg>
      </div>
      <div className="ml-[15px] h-[14px] w-[12px] border border-[#888] bg-[#e8b64a]" />
    </div>
    <div className="flex h-[19px] shrink-0 items-center border-b border-[#9a9a9a] bg-[#dcdcdc] pt-px pl-[3px]">Projects</div>
    <div className="flex flex-col bg-[linear-gradient(to_right,transparent_10px,#000_10px,#000_11px,transparent_11px,transparent_20px,#000_20px,#000_21px,transparent_21px)]">
      {tree.map(([n, k], i) => <TreeRow key={i} n={n} k={k} />)}
    </div>
  </div>
);

/* ---------- dock ---------- */

const Slot = ({ run, children }: Kids & { run?: boolean }) => (
  <div className="flex h-[68px] w-full shrink-0 items-center">
    <div className={`ml-[4px] h-[6px] w-[6px] rounded-full ${run ? "bg-[#e95420]" : ""}`} />
    <div className="flex w-[52px] justify-center">{children}</div>
  </div>
);

const Dock = () => (
  <div className="absolute top-0 left-0 flex h-[741px] w-[72px] flex-col bg-black/63 pt-[2px]">
    <Slot run>
      <Svg w={48} h={48}>
        <circle cx="24" cy="24" r="24" fill="#fbc116" />
        <path d="M24 24L3.2 12A24 24 0 0 1 44.8 12Z" fill="#e33b2e" />
        <path d="M3.2 12A24 24 0 0 0 24 48L34.4 30L24 34L13.6 30Z" fill="#229342" />
        <circle cx="24" cy="24" r="12" fill="#fff" />
        <circle cx="24" cy="24" r="9.7" fill="#1a73e8" />
      </Svg>
    </Slot>
    <Slot run>
      <Svg w={46} h={46}>
        <rect x="1" y="1" width="44" height="44" rx="4" fill="#968e7b" stroke="#b5ae9c" />
        <path d="M7 12.5a3 3 0 0 1 3-3h9l3.5 3.5H38v10H7z" fill="#e2ded2" />
        <rect x="7" y="13" width="32" height="24" rx="3" fill="#faf9f7" />
      </Svg>
    </Slot>
    <Slot>
      <Svg w={46} h={46}>
        <defs><linearGradient id="cal" x1="0" y1="0" x2="0" y2="1"><stop offset="0" stopColor="#2b8c90" /><stop offset="1" stopColor="#61ceba" /></linearGradient></defs>
        <rect x="1" y="1" width="44" height="44" rx="4" fill="url(#cal)" stroke="#7fd0c4" strokeWidth="0.6" />
        <path d="M1 23H45" stroke="#2a7f84" />
        <rect x="1" y="18" width="2" height="10" fill="#fff" /><rect x="43" y="18" width="2" height="10" fill="#fff" />
        <text x="23" y="32" textAnchor="middle" fontFamily="Open Sans" fontSize="26" fill="#fff" fillOpacity="0.93">28</text>
      </Svg>
    </Slot>
    <Slot>
      <Svg w={42} h={48}>
        <path d="M11 2L15 0.5H27L31 2L34 1.5L40 8L38.5 12L40 17L33.5 38L21 47.5L8.5 38L2 17L3.5 12L2 8L8 1.5Z" fill="#fb4a1c" />
        <path d="M11 9.5L16 8.5L21 10L26 8.5L31 9.5L36 16L32.5 24.5L33.5 28L27 31.5L29 35L21 40.5L13 35L15 31.5L8.5 28L9.5 24.5L6 16Z" fill="#fff" />
        <path d="M10 18L18 20L15.5 23ZM32 18L24 20L26.5 23ZM19.5 13H22.5L22 26L25 27.5L21 30L17 27.5L20 26ZM14 26L19 31.5L16 32L11 28ZM28 26L23 31.5L26 32L31 28Z" fill="#fb4a1c" />
      </Svg>
    </Slot>
    <Slot>
      <Svg w={46} h={46}>
        <rect x="6" y="3" width="34" height="41" rx="2" fill="#3b6fb0" />
        <rect x="6" y="2" width="34" height="40" rx="2" fill="#f8f7f5" />
        <path d="M10 6H37" stroke="#bbb" strokeDasharray="1.5 2" />
        <path d="M33 42L40 35V42Z" fill="#d9d9d9" />
        <path d="M13 30L36 6L43 12L19 36L11 38Z" fill="#efc228" />
        <path d="M13 30L36 6L38 8L15 32Z" fill="#fbe36a" />
        <path d="M11 34.5V38L14.5 37Z" fill="#333" />
      </Svg>
    </Slot>
    <Slot>
      <Svg w={46} h={46}>
        <rect x="5" y="1" width="36" height="44" rx="4" fill="#ecebea" />
        <path d="M9 10H37M9 14.5H37M9 19H37M9 23.5H37M9 28H37M9 32.5H37" stroke="#c9c9c9" />
        <path d="M12 30L30 11L37 17L18 35L10 38Z" fill="#2f6be0" />
        <path d="M10 38L12 30L18 35Z" fill="#efc7a2" /><path d="M10 38L11 35L13 37Z" fill="#333" />
      </Svg>
    </Slot>
    <Slot run>
      <Svg w={46} h={38}>
        <rect x="1" y="1" width="44" height="36" rx="4" fill="#474747" stroke="#606060" />
        <path d="M7 6L12 9.5L7 13" fill="none" stroke="#fff" strokeWidth="1.8" /><path d="M13.5 15.5H20.5" stroke="#fff" strokeWidth="1.8" />
      </Svg>
    </Slot>
    <Slot>
      <Svg w={38} h={46}>
        <rect x="1" y="1" width="36" height="44" rx="4" fill="#5c8df0" />
        <path d="M5.5 11L9.5 15L14.5 8.5M5.5 34L9.5 38L14.5 31.5M19 12.5H31M19 35H31" fill="none" stroke="#3a63b8" strokeWidth="2" />
        <path d="M5.5 23L9.5 27L14.5 20.5M19 24H31" fill="none" stroke="#fff" strokeWidth="2.2" />
      </Svg>
    </Slot>
    <Slot>
      <Svg w={38} h={46}>
        <path d="M5 1H25L37 13V41a4 4 0 0 1-4 4H5a4 4 0 0 1-4-4V5a4 4 0 0 1 4-4z" fill="#1779b5" />
        <path d="M6 4H23L34 15V42H6a2 2 0 0 1-2-2V6a2 2 0 0 1 2-2z" fill="#fbfbfb" />
        <path d="M27 1H37V11Z" fill="#0f6599" />
        <path d="M7 18.5H15M7 22H15M7 26H15M7 31H31M7 35H31M7 39H24" stroke="#1779b5" strokeWidth="1.8" />
        <rect x="18" y="18" width="14" height="9" fill="#7fb6dd" /><path d="M18 27L22 21.5L25 25L28 20.5L32 27Z" fill="#444" />
      </Svg>
    </Slot>
    <Slot>
      <div className="mb-[3px]">
        <Svg w={44} h={38}>
          <rect width="44" height="38" fill="#2c2c2c" />
          <path d="M0 1H44" stroke="#d5d5d5" strokeWidth="2" />
          <path d="M0 5H44M0 34.5H44" stroke="#e5e5e5" strokeWidth="3" strokeDasharray="3 2" />
          <rect y="8" width="44" height="23" fill="#a33aa0" /><rect y="8" width="44" height="6" fill="#c565c0" />
          <circle cx="14" cy="20" r="9" fill="#ddd" stroke="#999" /><circle cx="14" cy="20" r="5.6" fill="#8f8f9a" /><circle cx="14" cy="20" r="3.2" fill="#3d1f9e" />
          <path d="M36 11V28M40 11V28" stroke="#e08ae0" strokeWidth="2.6" strokeDasharray="2 2" />
        </Svg>
      </div>
    </Slot>
    <div className="ml-[21px] grid w-fit grid-cols-3 gap-[6px] pt-[10px]">
      {Array.from({ length: 9 }, (_, i) => <div key={i} className="h-[6px] w-[6px] rounded-[1px] bg-white" />)}
    </div>
  </div>
);

/* ---------- top bar ---------- */

const Caret = () => <Svg w={12} h={7}><path d="M0.5 0.5H11.5L6 6.5Z" fill="#f2f2f2" /></Svg>;

const TopBar = () => (
  <div className="grid h-[27px] shrink-0 grid-cols-3 items-center bg-[#1d1d1d] font-['Open_Sans','Noto_Sans',sans-serif] text-[14px] leading-none text-[#f2f2f2]">
    <div className="flex items-center pl-[12px]">
      <span className="w-[97px] text-[14.6px] tracking-[0.2px]">Activities</span>
      <Svg w={16} h={16}><rect width="16" height="16" fill="#fff" /><text x="8" y="13" textAnchor="middle" fontFamily="Liberation Serif" fontSize="15" fill="#000">S</text></Svg>
      <span className="mr-[4px] ml-[6px] w-[82px] tracking-[0.1px] whitespace-nowrap">svisual_exec</span>
      <Caret />
    </div>
    <div className="flex items-center pl-[210px] whitespace-nowrap">
      <span className="w-[57px]">May 10</span><span className="w-[65px]">1:42 PM</span>
      <div className="-mt-px h-[8px] w-[8px] rounded-full bg-[#f2f2f2]" />
    </div>
    <div className="flex items-center justify-end pr-[14px]">
      <Svg w={16} h={14}><path d="M8 4V7M2.5 10V7.5H13.5V10" fill="none" stroke="#f2f2f2" strokeWidth="1.3" /><rect x="5.5" y="0" width="5" height="4" fill="#f2f2f2" /><rect x="0.5" y="9.5" width="4.5" height="4" fill="#f2f2f2" /><rect x="11" y="9.5" width="4.5" height="4" fill="#f2f2f2" /></Svg>
      <div className="ml-[13px]">
        <Svg w={16} h={14}><path d="M0.5 4.5H3.5L8 1V13L3.5 9.5H0.5Z" fill="#f2f2f2" /><path d="M9.8 4.5Q11.5 7 9.8 9.5" fill="none" stroke="#f2f2f2" strokeWidth="1.3" /><path d="M12 2.5Q15 7 12 11.5" fill="none" stroke="#888" strokeWidth="1.3" /></Svg>
      </div>
      <div className="ml-[12px]">
        <Svg w={15} h={16}><path d="M3.5 3.5L0.5 8.5H2.5L1.5 12.5L4.5 7.5H2.5Z" fill="#aaa" /><rect x="6.7" y="2" width="7.2" height="13" rx="1" fill="none" stroke="#f2f2f2" strokeWidth="1.4" /><rect x="8.5" y="4" width="3.6" height="9.3" fill="#f2f2f2" /><rect x="8.5" y="0" width="3.6" height="2" fill="#f2f2f2" /></Svg>
      </div>
      <span className="mr-[5px] ml-[6px] whitespace-nowrap">100 %</span>
      <Caret />
    </div>
  </div>
);

const Wallpaper = () => (
  <div className="absolute inset-0 bg-linear-to-r from-[#561c3f] to-[#7c2541]">
    <svg width="1366" height="741" className="block">
      <defs>
        <linearGradient id="wp" x1="0" y1="0" x2="0" y2="1">
          <stop offset="0" stopColor="#7b2644" /><stop offset="0.35" stopColor="#a13543" /><stop offset="0.65" stopColor="#bf433a" /><stop offset="0.85" stopColor="#d04a33" /><stop offset="1" stopColor="#d04a33" />
        </linearGradient>
        <linearGradient id="wd" x1="0" y1="0" x2="0" y2="1"><stop offset="0" stopColor="#b03524" /><stop offset="1" stopColor="#a82612" /></linearGradient>
        <linearGradient id="wf" x1="0" y1="0" x2="1" y2="0"><stop offset="0" stopColor="#6e2244" stopOpacity="1" /><stop offset="1" stopColor="#7b2644" stopOpacity="0" /></linearGradient>
      </defs>
      <rect x="1200" width="166" height="741" fill="url(#wp)" />
      <rect x="1200" width="150" height="60" fill="url(#wf)" />
      <path d="M1326 545L1366 648V741H1300Z" fill="url(#wd)" />
    </svg>
  </div>
);

export default function App() {
  return (
    <div className="flex h-[768px] w-[1366px] flex-col overflow-hidden bg-[#1d1d1d]">
      <TopBar />
      <div className="relative flex-1 overflow-hidden">
        <Wallpaper />
        <FilesWindow />
        <ProjectWindow />
        <Dock />
        <MainWindow />
      </div>
    </div>
  );
}
